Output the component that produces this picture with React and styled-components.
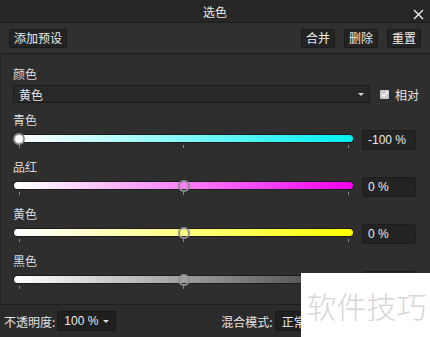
import React from "react";
import styled, { createGlobalStyle } from "styled-components";

const GlobalStyle = createGlobalStyle`
  html, body {
    margin: 0;
    padding: 0;
    background: #2e2e2e;
  }
  * {
    box-sizing: border-box;
  }
`;

const Window = styled.div`
  position: relative;
  width: 430px;
  height: 337px;
  overflow: hidden;
  background: #2e2e2e;
  color: #dedede;
  font-family: "Noto Sans CJK SC", "Liberation Sans", sans-serif;
  font-size: 12px;
  display: flex;
  flex-direction: column;
  box-shadow: inset 1px 0 0 #242424;
`;

const TitleBar = styled.div`
  height: 23px;
  background: #262626;
  border-bottom: 1px solid #1d1d1d;
  display: flex;
  align-items: center;
  justify-content: center;
  position: relative;
  font-size: 12px;
  color: #e8e8e8;
`;

const CloseBtn = styled.div`
  position: absolute;
  right: 6px;
  top: 6px;
  width: 11px;
  height: 11px;
`;

const Toolbar = styled.div`
  height: 31px;
  display: flex;
  align-items: center;
  padding: 0 9px 0 9px;
  gap: 9px;
  border-bottom: 1px solid #1f1f1f;
  background: #303030;
`;

const ToolButton = styled.div`
  height: 19px;
  padding: 0 4px;
  display: flex;
  align-items: center;
  background: #232323;
  border: 1px solid #1b1b1b;
  border-radius: 2px;
  color: #ececec;
  font-size: 12px;
  line-height: 1;
  white-space: nowrap;
  margin-left: ${(p) => (p.$push ? "auto" : "0")};
`;

const Content = styled.div`
  flex: 1;
  padding: 12px 14px 0 13px;
  border-bottom: 1px solid #1f1f1f;
`;

const Label = styled.div`
  height: 16px;
  line-height: 16px;
  font-size: 12px;
  color: #dcdcdc;
`;

const PickerRow = styled.div`
  margin-top: 3px;
  display: flex;
  align-items: center;
  height: 18px;
  white-space: nowrap;
`;

const Select = styled.div`
  flex: none;
  width: 357px;
  height: 18px;
  background: #282828;
  border: 1px solid #1a1a1a;
  border-radius: 2px;
  display: flex;
  align-items: center;
  padding: 0 5px;
  color: #e6e6e6;
`;

const Caret = styled.span`
  margin-left: auto;
  width: 0;
  height: 0;
  border-left: 3px solid transparent;
  border-right: 3px solid transparent;
  border-top: 3px solid #d8d8d8;
`;

const Check = styled.div`
  flex: none;
  margin-left: 10px;
  width: 9px;
  height: 9px;
  background: #c9c9c9;
  border-radius: 1px;
  display: flex;
  align-items: center;
  justify-content: center;
`;

const CheckLabel = styled.span`
  flex: none;
  margin-left: 6px;
  color: #e6e6e6;
`;

const Channel = styled.div`
  margin-top: 9px;
`;

const SliderRow = styled.div`
  margin-top: 2px;
  height: 20px;
  display: flex;
  padding-left: 1px;
`;

const SliderArea = styled.div`
  position: relative;
  width: 339px;
  height: 20px;
`;

const Track = styled.div`
  position: absolute;
  left: 0;
  right: 0;
  top: 5px;
  height: 7px;
  border-radius: 4px;
  background: linear-gradient(to right, #ffffff 2%, ${(p) => p.$color});
  box-shadow: 0 0 0 1px #1c1c1c;
`;

const Tick = styled.span`
  position: absolute;
  top: 15px;
  width: 1px;
  height: 3px;
  background: #8a8a8a;
`;

const Thumb = styled.span`
  position: absolute;
  top: 2.5px;
  width: 12px;
  height: 12px;
  margin-left: -6px;
  border-radius: 50%;
  border: 2px solid #8f8f8f;
  background: ${(p) => (p.$solid ? "#ffffff" : "transparent")};
`;

const ValueBox = styled.div`
  margin-left: 9px;
  width: 54px;
  height: 20px;
  background: #232323;
  border: 1px solid #1c1c1c;
  border-radius: 2px;
  display: flex;
  align-items: center;
  padding-left: 5px;
  font-family: "Liberation Sans", "Noto Sans CJK SC", sans-serif;
  font-size: 12px;
  color: #ececec;
`;

const BottomBar = styled.div`
  height: 32px;
  display: flex;
  align-items: center;
  padding-left: 4px;
  background: #2b2b2b;
  white-space: nowrap;
`;

const BottomLabel = styled.span`
  font-size: 12px;
  color: #e2e2e2;
  margin-left: ${(p) => p.$gap || "0"};
`;

const BottomSelect = styled.div`
  flex: none;
  margin-left: 2px;
  width: ${(p) => p.$w};
  height: 20px;
  background: #1f1f1f;
  border: 1px solid #191919;
  border-radius: 2px;
  display: flex;
  align-items: center;
  padding: 0 6px;
  color: #ececec;
  font-family: "Liberation Sans", "Noto Sans CJK SC", sans-serif;
`;

const Watermark = styled.div`
  position: absolute;
  left: 301px;
  top: 273px;
  width: 129px;
  height: 64px;
  background: #ffffff;
  display: flex;
  align-items: center;
  justify-content: center;
  padding-left: 2px;
  font-family: "Noto Sans CJK SC", sans-serif;
  font-size: 30px;
  font-weight: 300;
  color: #d6d6d6;
`;

const channels = [
  { name: "青色", color: "#00f0f0", value: -100 },
  { name: "品红", color: "#f000f0", value: 0 },
  { name: "黄色", color: "#ffff00", value: 0 },
  { name: "黑色", color: "#3a3a3a", value: 0 },
];

function Slider({ color, value }) {
  const pos = 5 + ((value + 100) / 200) * 329;
  return (
    <SliderArea>
      <Track $color={color} />
      <Tick style={{ left: 5 }} />
      <Tick style={{ left: 169 }} />
      <Tick style={{ left: 334 }} />
      <Thumb $solid={value === -100} style={{ left: pos }} />
    </SliderArea>
  );
}

export default function App() {
  return (
    <>
      <GlobalStyle />
      <Window>
        <TitleBar>
          选色
          <CloseBtn>
            <svg width="11" height="11" viewBox="0 0 11 11">
              <path d="M1 1 L10 10 M10 1 L1 10" stroke="#ececec" strokeWidth="1.4" />
            </svg>
          </CloseBtn>
        </TitleBar>
        <Toolbar>
          <ToolButton>添加预设</ToolButton>
          <ToolButton $push>合并</ToolButton>
          <ToolButton>删除</ToolButton>
          <ToolButton>重置</ToolButton>
        </Toolbar>
        <Content>
          <Label>颜色</Label>
          <PickerRow>
            <Select>
              黄色
              <Caret />
            </Select>
            <Check>
              <svg width="8" height="8" viewBox="0 0 8 8">
                <path d="M1 4.2 L3 6.3 L7 1.3" stroke="#f8f8f8" strokeWidth="1.6" fill="none" />
              </svg>
            </Check>
            <CheckLabel>相对</CheckLabel>
          </PickerRow>
          {channels.map((c) => (
            <Channel key={c.name}>
              <Label>{c.name}</Label>
              <SliderRow>
                <Slider color={c.color} value={c.value} />
                <ValueBox>{c.value} %</ValueBox>
              </SliderRow>
            </Channel>
          ))}
        </Content>
        <BottomBar>
          <BottomLabel>不透明度:</BottomLabel>
          <BottomSelect $w="59px">
            100 %
            <Caret />
          </BottomSelect>
          <BottomLabel $gap="105px">混合模式:</BottomLabel>
          <BottomSelect $w="120px">正常</BottomSelect>
        </BottomBar>
        <Watermark>软件技巧</Watermark>
      </Window>
    </>
  );
}
